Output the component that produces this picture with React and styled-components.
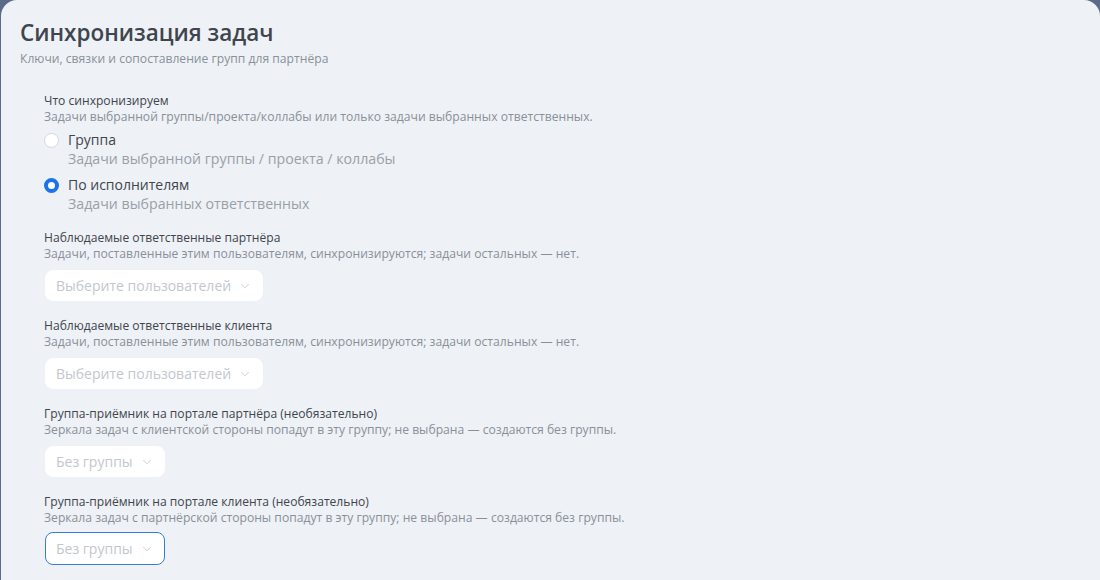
import React, { useState } from 'react';
import styled, { createGlobalStyle } from 'styled-components';
import { ChevronDown } from 'lucide-react';

const GlobalStyle = createGlobalStyle`
  html, body {
    margin: 0;
    padding: 0;
    background: #5b6a8a;
  }

  body {
    font-family: 'Open Sans', 'Noto Sans', sans-serif;
    -webkit-font-smoothing: antialiased;
  }
`;

const Card = styled.div`
  min-height: 100vh;
  box-sizing: border-box;
  margin-left: 1px;
  background: #eef2f6;
  border-radius: 16px 16px 0 0;
  padding: 18px 19px 20px;
`;

const Title = styled.h1`
  margin: 0;
  font-size: 22.5px;
  line-height: 30px;
  font-weight: 600;
  color: #3f454d;
`;

const Subtitle = styled.div`
  margin-top: 3px;
  font-size: 12.15px;
  line-height: 16px;
  color: #8a9099;
`;

const Form = styled.div`
  margin-top: 26px;
  padding-left: 24px;
  display: flex;
  flex-direction: column;
  gap: 17px;
`;

const Field = styled.div`
  display: flex;
  flex-direction: column;
  align-items: flex-start;
`;

const Label = styled.div`
  font-size: 12.1px;
  line-height: 16px;
  color: #40454d;
`;

const Hint = styled.div`
  font-size: 12.15px;
  line-height: 16px;
  color: #8a9099;
`;

const RadioList = styled.div`
  margin-top: 5px;
  display: flex;
  flex-direction: column;
  gap: 7px;
`;

const Option = styled.label`
  display: grid;
  grid-template-columns: 16px auto;
  column-gap: 8px;
  cursor: pointer;
`;

const Dot = styled.span`
  box-sizing: border-box;
  width: 15px;
  height: 15px;
  margin-top: 3px;
  border-radius: 50%;
  border: ${(p) => (p.checked ? '4px solid #1a73e8' : '1px solid #d3d7dd')};
  background: #fff;
`;

const OptionTitle = styled.div`
  font-size: 14px;
  line-height: 20px;
  color: #40454d;
`;

const OptionHint = styled.div`
  grid-column: 2;
  font-size: 14.2px;
  line-height: 18px;
  color: #9a9fa7;
`;

const Select = styled.button`
  margin-top: ${(p) => (p.focused ? '6px' : '8px')};
  margin-left: 1px;
  height: ${(p) => (p.focused ? '33px' : '31px')};
  box-sizing: border-box;
  display: inline-flex;
  align-items: center;
  gap: 7px;
  padding: 0 10px 0 10px;
  background: #fff;
  border: 1px solid ${(p) => (p.focused ? '#3a7bd5' : '#fff')};
  border-radius: 8px;
  font-family: inherit;
  font-size: 14px;
  color: #c3c7cd;
  cursor: pointer;
`;

const options = [
  { id: 'group', title: 'Группа', hint: 'Задачи выбранной группы / проекта / коллабы' },
  { id: 'assignee', title: 'По исполнителям', hint: 'Задачи выбранных ответственных' },
];

const fields = [
  {
    label: 'Наблюдаемые ответственные партнёра',
    hint: 'Задачи, поставленные этим пользователям, синхронизируются; задачи остальных — нет.',
    placeholder: 'Выберите пользователей',
  },
  {
    label: 'Наблюдаемые ответственные клиента',
    hint: 'Задачи, поставленные этим пользователям, синхронизируются; задачи остальных — нет.',
    placeholder: 'Выберите пользователей',
  },
  {
    label: 'Группа-приёмник на портале партнёра (необязательно)',
    hint: 'Зеркала задач с клиентской стороны попадут в эту группу; не выбрана — создаются без группы.',
    placeholder: 'Без группы',
  },
  {
    label: 'Группа-приёмник на портале клиента (необязательно)',
    hint: 'Зеркала задач с партнёрской стороны попадут в эту группу; не выбрана — создаются без группы.',
    placeholder: 'Без группы',
    focused: true,
  },
];

const App = () => {
  const [mode, setMode] = useState('assignee');

  return (
    <>
      <GlobalStyle />
      <Card>
        <Title>Синхронизация задач</Title>
        <Subtitle>Ключи, связки и сопоставление групп для партнёра</Subtitle>

        <Form>
          <Field>
            <Label>Что синхронизируем</Label>
            <Hint>Задачи выбранной группы/проекта/коллабы или только задачи выбранных ответственных.</Hint>
            <RadioList>
              {options.map((o) => (
                <Option key={o.id} onClick={() => setMode(o.id)}>
                  <Dot checked={mode === o.id} />
                  <OptionTitle>{o.title}</OptionTitle>
                  <OptionHint>{o.hint}</OptionHint>
                </Option>
              ))}
            </RadioList>
          </Field>

          {fields.map((f) => (
            <Field key={f.label}>
              <Label>{f.label}</Label>
              <Hint>{f.hint}</Hint>
              <Select focused={f.focused}>
                {f.placeholder}
                <ChevronDown size={14} strokeWidth={1.5} color="#c3c7cd" />
              </Select>
            </Field>
          ))}
        </Form>
      </Card>
    </>
  );
};

export default App;
